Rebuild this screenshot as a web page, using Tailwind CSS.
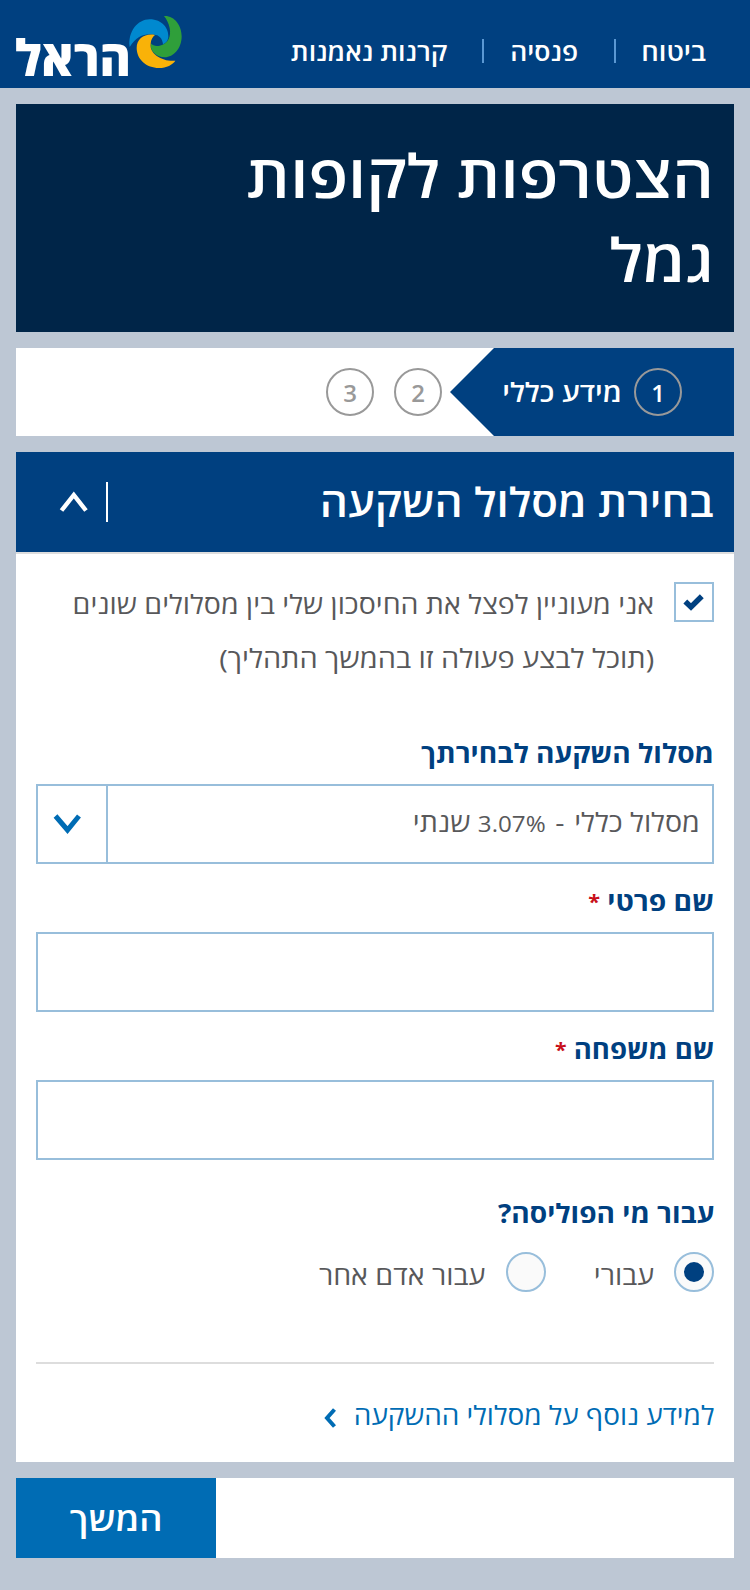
<!DOCTYPE html>
<html lang="he" dir="rtl">
<head>
<meta charset="utf-8">
<title>הצטרפות לקופות גמל</title>
<script src="https://cdn.jsdelivr.net/npm/@tailwindcss/browser@4"></script>
</head>
<body class="min-h-[1590px] bg-[#bdc7d4] font-['Open_Sans',sans-serif] text-[26px] text-[#58585a]">
<header class="flex h-[88px] justify-between bg-[#004080] pr-[44px] pl-4">
  <nav class="flex items-center pt-[14px] text-[25px] leading-[40px] font-semibold whitespace-nowrap text-white">
    <a class="w-[64px] origin-right scale-x-109">ביטוח</a>
    <span class="mr-[26px] mb-px ml-[36px] h-6 w-0.5 bg-[#5b98d3]"></span>
    <a class="w-[68px] origin-right scale-x-106">פנסיה</a>
    <span class="mr-[26px] mb-px ml-[35px] h-6 w-0.5 bg-[#5b98d3]"></span>
    <a class="origin-right scale-x-107">קרנות נאמנות</a>
  </nav>
  <svg class="mt-[10px] h-[68px] w-[170px] overflow-visible" viewBox="16 10 170 68" role="img" aria-label="הראל">
    <text x="131" y="75.6" direction="rtl" text-anchor="start" textLength="116" lengthAdjust="spacingAndGlyphs" class="fill-white text-[50px] font-extrabold">הראל</text>
    <g transform="translate(125 10) scale(.3333)">
      <path fill="#0089cf" d="M14 111C8 65 38 28 74 28C112 28 132 56 130 82C128 94 122 100 114 103C113 84 100 74 88 74C60 70 36 76 14 111Z"/>
      <path fill="#2f9f3a" d="M117 18C148 16 170 46 170 79C170 115 146 142 119 142C96 142 74 124 77 100C84 108 94 109 104 107C130 102 139 78 134 54C131 39 125 28 117 18Z"/>
      <path fill="#f9b208" d="M90 75C62 69 35 84 35 114C35 148 64 174 102 174C125 174 143 164 151 152C115 156 72 132 77 101C78 89 83 80 90 75Z"/>
    </g>
  </svg>
</header>

<main class="flex flex-col gap-4 px-4 pt-4">
  <div class="h-[228px] bg-[#002548] pt-[29px] pr-5">
    <h1 class="w-fit origin-right scale-x-[1.087] text-[60px] leading-[84px] font-semibold whitespace-nowrap text-white">הצטרפות לקופות<br>גמל</h1>
  </div>

  <ol class="flex h-[88px] items-center bg-white text-[24px] font-semibold text-[#999]">
    <li class="flex h-[88px] w-[284px] items-center bg-[#004080] pr-[52px] text-white [clip-path:polygon(0_50%,44px_0,100%_0,100%_100%,44px_100%)]">
      <span class="flex size-12 items-center justify-center rounded-full border-2 border-[#999] pt-px">1</span>
      <span class="mr-3 origin-right scale-x-112 text-[26px] leading-[40px] whitespace-nowrap">מידע כללי</span>
    </li>
    <li class="mr-2 flex size-12 items-center justify-center rounded-full border-2 border-[#999] pt-px">2</li>
    <li class="mr-5 flex size-12 items-center justify-center rounded-full border-2 border-[#999] pt-px">3</li>
  </ol>

  <section class="h-[1010px] bg-white">
    <div class="flex h-[102px] items-center justify-between border-b-2 border-[#ddd] bg-[#004080] pr-5 pl-[43px] text-white">
      <h2 class="origin-right scale-x-[1.095] pb-px text-[40px] leading-[60px] font-semibold whitespace-nowrap">בחירת מסלול השקעה</h2>
      <div class="flex h-10 items-center border-r-2 border-white pr-[17px]">
        <svg class="h-6 w-[30px]" viewBox="0 0 30 24" fill="none" stroke="white" stroke-width="4.4"><path d="M2.5 20.5L14.8 5L27 20.5"/></svg>
      </div>
    </div>

    <div class="px-5">
      <label class="flex pt-[23px]">
        <span class="mt-[5px] flex size-10 items-center justify-center border-2 border-[#98bedb]">
          <svg class="size-9" viewBox="0 0 36 36" fill="none" stroke="#004080" stroke-width="5.5"><path d="M9.3 17.5L15 23L25.8 12.3"/></svg>
        </span>
        <span class="mr-5 leading-[54px] whitespace-nowrap"><span class="block w-fit origin-right scale-x-[1.097]">אני מעוניין לפצל את החיסכון שלי בין מסלולים שונים</span><span class="block w-fit origin-right scale-x-[1.112]">(תוכל לבצע פעולה זו בהמשך התהליך)</span></span>
      </label>

      <div class="mt-[50px] w-fit origin-right scale-x-[1.081] leading-[36px] font-bold whitespace-nowrap text-[#004080]">מסלול השקעה לבחירתך</div>
      <div class="mt-[13px] flex h-20 justify-between border-2 border-[#98bedb]">
        <div class="origin-right scale-x-[1.1] pr-[11px] leading-[72px] whitespace-nowrap">מסלול כללי <span class="px-[2px]">-</span> <span class="text-[22px]">3.07%</span> שנתי</div>
        <div class="flex w-[70px] items-center justify-end border-r-2 border-[#98bedb] pl-[15px]">
          <svg class="h-6 w-7" viewBox="0 0 28 24" fill="none" stroke="#006cb4" stroke-width="5"><path d="M2.5 4L14.5 18L26 4"/></svg>
        </div>
      </div>

      <div class="mt-[19px] w-fit origin-right scale-x-[1.085] leading-[36px] font-bold whitespace-nowrap text-[#004080]">שם פרטי <span class="align-[2px] text-[20px] leading-none text-[#c8101a]">*</span></div>
      <div class="mt-[13px] h-20 border-2 border-[#98bedb]"></div>

      <div class="mt-[19px] w-fit origin-right scale-x-[1.06] leading-[36px] font-bold whitespace-nowrap text-[#004080]">שם משפחה <span class="align-[2px] text-[20px] leading-none text-[#c8101a]">*</span></div>
      <div class="mt-[13px] h-20 border-2 border-[#98bedb]"></div>

      <div class="mt-[35px] w-fit origin-right scale-x-[1.08] leading-[36px] font-bold whitespace-nowrap text-[#004080]">עבור מי הפוליסה?</div>
      <div class="mt-[21px] flex h-10 items-center leading-[40px] whitespace-nowrap">
        <span class="flex size-10 items-center justify-center rounded-full border-2 border-[#98bedb] bg-[#fafafa]"><span class="size-5 rounded-full bg-[#004080]"></span></span>
        <span class="mr-5 w-[60px] origin-right scale-x-110 pt-[6px]">עבורי</span>
        <span class="mr-12 size-10 rounded-full border-2 border-[#98bedb] bg-[#fafafa]"></span>
        <span class="mr-[21px] origin-right scale-x-110 pt-[6px]">עבור אדם אחר</span>
      </div>

      <div class="mt-[70px] flex items-center border-t-2 border-[#ddd] pt-[33px] leading-[36px] whitespace-nowrap text-[#006cb4]">
        <span class="w-[360px]"><span class="block w-fit origin-right scale-x-[1.075]">למידע נוסף על מסלולי ההשקעה</span></span>
        <svg class="mt-[5px] mr-[18px] h-5 w-3" viewBox="0 0 12 20" fill="none" stroke="currentColor" stroke-width="4"><path d="M10.5 1.5L3 10L10.5 18.5"/></svg>
      </div>
    </div>
  </section>

  <div class="flex h-20 justify-end bg-white">
    <button class="w-[200px] bg-[#006cb4] pt-px text-[33px] leading-[50px] font-semibold text-white"><span class="inline-block scale-x-110">המשך</span></button>
  </div>
</main>
</body>
</html>
